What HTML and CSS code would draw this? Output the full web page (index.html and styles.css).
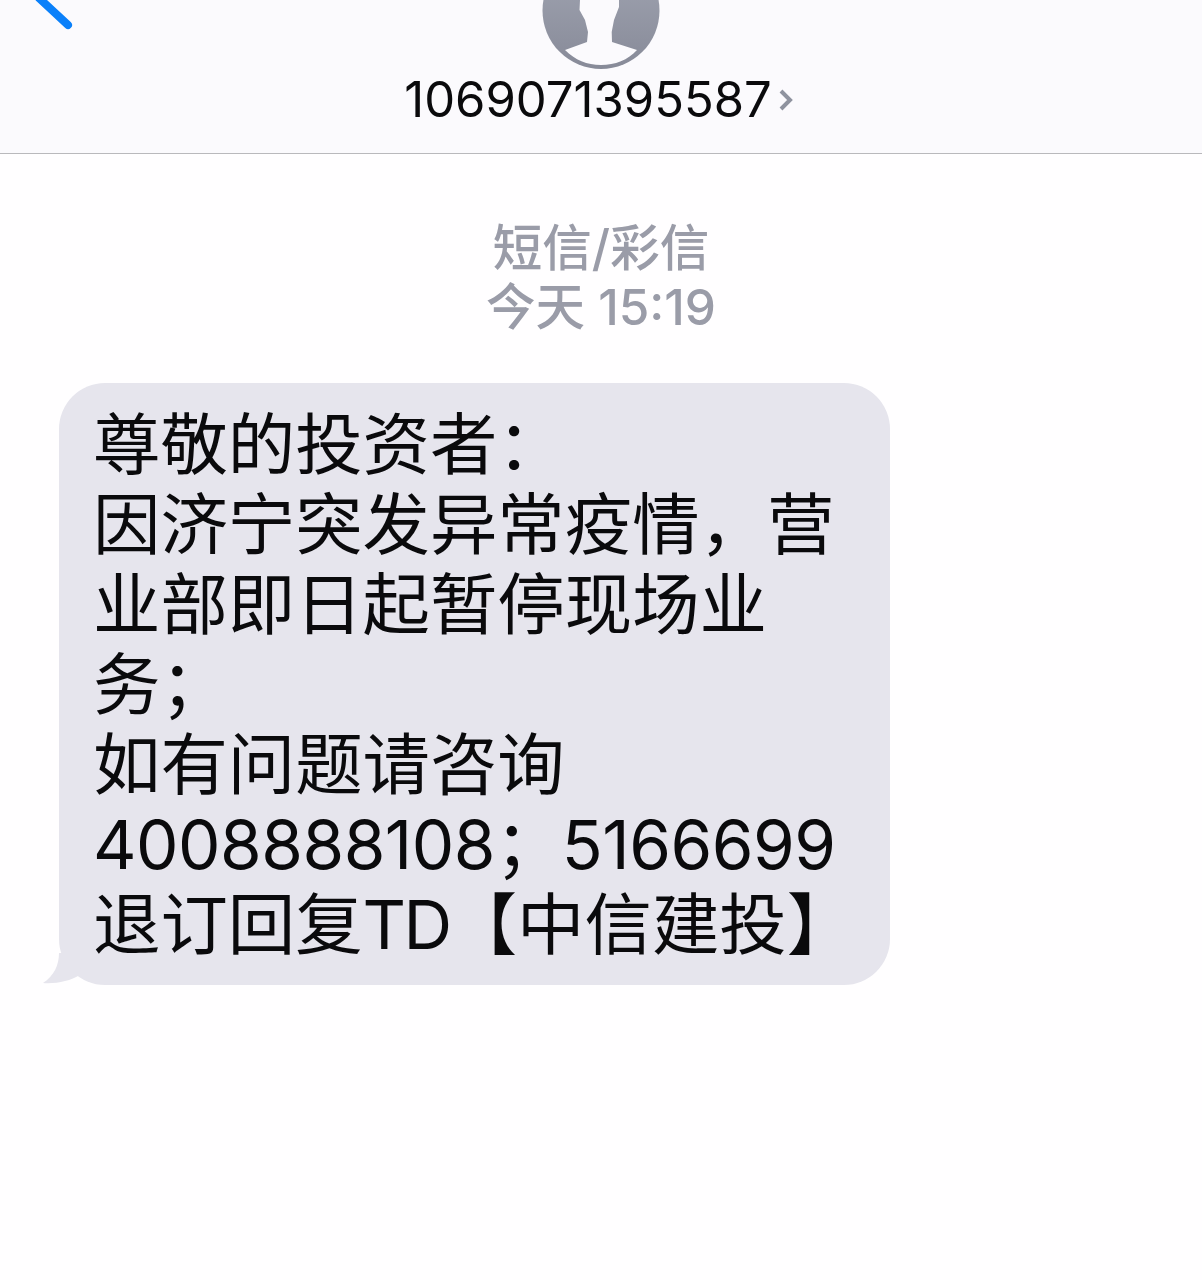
FILE: index.html
```html
<!DOCTYPE html>
<html lang="zh">
<head>
    <meta charset="UTF-8">
    <meta name="viewport" content="width=device-width, initial-scale=1.0">
    <title>短信</title>
    <link rel="stylesheet" href="styles.css">
</head>
<body>
    <div class="screen">
        <header class="nav-bar">
            <svg class="back-icon" width="80" height="32" viewBox="0 0 80 32">
                <path d="M39 -2L68 25" fill="none" stroke="#0a80fa" stroke-width="8" stroke-linecap="round"/>
            </svg>
            <div class="contact">
                <svg class="avatar" width="120" height="72" viewBox="0 0 120 72">
                    <defs>
                        <linearGradient id="avatar-fill" x1="0" y1="0" x2="0" y2="1">
                            <stop offset="0" stop-color="#a3a7b4"/>
                            <stop offset="1" stop-color="#878a98"/>
                        </linearGradient>
                    </defs>
                    <circle cx="60" cy="10.500" r="58.500" fill="url(#avatar-fill)"/>
                    <path d="M39 0L38.500 10L44 20L47 32L46 42L24 50C34 60 46 65 60 65C74 65 87 60 96 50L71 42L70.700 32L73 20L78 7L78 0Z" fill="#fbfafd"/>
                </svg>
                <div class="contact-name">
                    <span class="number">1069071395587</span>
                    <svg class="chevron" width="14" height="24" viewBox="0 0 14 24">
                        <path d="M2 3L11 12L2 21" fill="none" stroke="#8f939f" stroke-width="4"/>
                    </svg>
                </div>
            </div>
        </header>

        <div class="thread">
            <div class="thread-meta">
                <div>短信/彩信</div>
                <div>今天 15:19</div>
            </div>
            <div class="bubble-row">
                <div class="bubble">
                    <div>尊敬的投资者：</div>
                    <div>因济宁突发异常疫情，营业部即日起暂停现场业务；</div>
                    <div>如有问题请咨询</div>
                    <div class="digits">4008888108；5166699</div>
                    <div class="last-line">退订回复<span class="tight">TD</span>【中信建投】</div>
                </div>
                <svg class="bubble-tail" width="40" height="32" viewBox="0 0 40 32">
                    <path d="M17 0C17 12 12 23 1 30C14 31 28 28 38 22L40 0Z" fill="#e6e5ed"/>
                </svg>
            </div>
        </div>
    </div>
</body>
</html>
```

FILE: styles.css
```css
body {
    margin: 0;
    background-color: #fffeff;
    font-family: "Inter", "Noto Sans CJK SC", sans-serif;
}

.screen {
    min-height: 1280px;
    overflow: hidden;
}

.nav-bar {
    position: relative;
    height: 153px;
    background-color: #fbfafd;
    border-bottom: 1px solid #b9b9bc;
}

.back-icon {
    position: absolute;
    top: 0;
    left: 0;
}

.contact {
    display: flex;
    flex-direction: column;
    align-items: center;
}

.avatar {
    display: block;
}

.contact-name {
    display: flex;
    align-items: center;
    gap: 7px;
    margin-left: -5px;
    height: 54px;
}

.number {
    font-size: 49px;
    color: #0a0a0c;
}

.chevron {
    display: block;
    margin-top: 1px;
}

.thread {
    padding-top: 65px;
}

.thread-meta {
    text-align: center;
    font-size: 49.500px;
    font-weight: 500;
    line-height: 59px;
    color: #9a9ca8;
}

.bubble-row {
    position: relative;
    width: 831px;
    margin-top: 46px;
    margin-left: 59px;
}

.bubble {
    background-color: #e6e5ed;
    border-radius: 46px;
    padding: 22px 37px 20px 34px;
    font-size: 67.400px;
    line-height: 80px;
    color: #0a0a0c;
}

.digits {
    letter-spacing: -0.500px;
}

.last-line {
    white-space: nowrap;
}

.tight {
    letter-spacing: -2.500px;
}

.bubble-tail {
    position: absolute;
    left: -17px;
    bottom: 0;
}
```
